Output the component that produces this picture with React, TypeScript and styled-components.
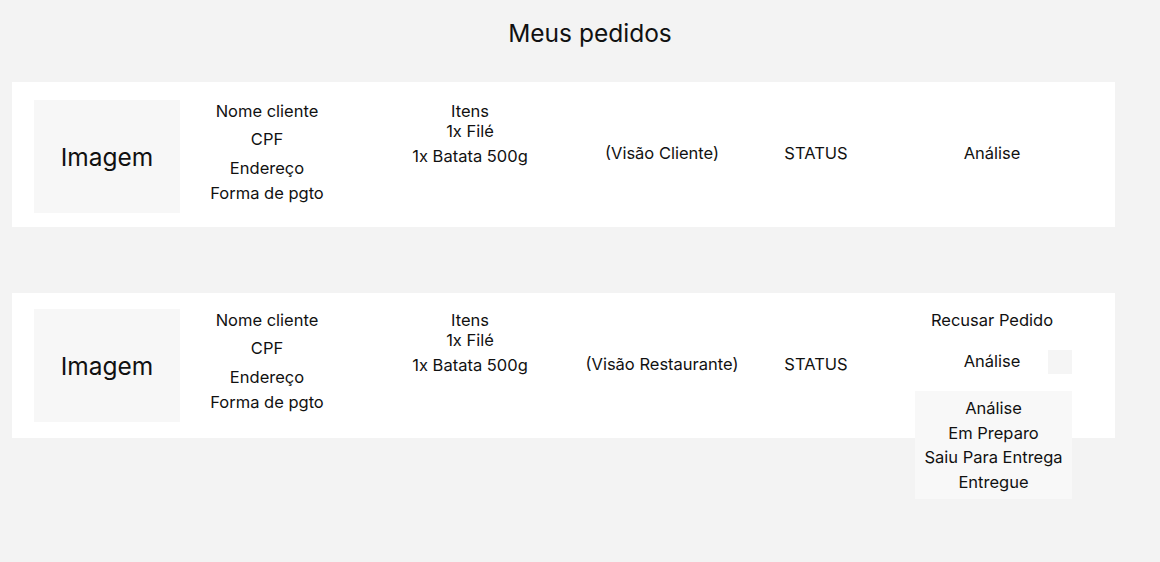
import React from "react";
import styled, { createGlobalStyle } from "styled-components";

const GlobalStyle = createGlobalStyle`
  html, body {
    margin: 0;
    padding: 0;
    background: #f3f3f3;
  }
  body {
    font-family: Inter, "Noto Sans", sans-serif;
    color: #111111;
  }
`;

const Page = styled.main`
  width: 1160px;
  height: 562px;
  box-sizing: border-box;
  padding: 0 45px 0 12px;
  display: flex;
  flex-direction: column;
  overflow: hidden;
`;

const Title = styled.h1`
  margin: 0;
  height: 82px;
  box-sizing: border-box;
  padding-top: 17px;
  padding-left: 53px;
  font-size: 24.5px;
  font-weight: 400;
  line-height: 32px;
  text-align: center;
`;

const OrderList = styled.div`
  display: flex;
  flex-direction: column;
  gap: 66px;
`;

const Card = styled.section`
  position: relative;
  height: 145px;
  background: #ffffff;
  display: flex;
  align-items: center;
  padding-left: 22px;
`;

const ImageBox = styled.div<{ $offset: number }>`
  width: 146px;
  height: 113px;
  background: #f7f7f7;
  display: flex;
  align-items: center;
  justify-content: center;
  font-size: 24.5px;
  align-self: flex-start;
  margin-top: ${(p) => p.$offset}px;
`;

const Column = styled.div<{ $width: number; $top?: number; $gutter?: number }>`
  width: ${(p) => p.$width}px;
  margin-left: ${(p) => p.$gutter ?? 0}px;
  display: flex;
  flex-direction: column;
  align-items: center;
  text-align: center;
  font-size: 16.5px;
  line-height: 20px;
  ${(p) =>
    p.$top !== undefined
      ? `align-self: flex-start; padding-top: ${p.$top}px;`
      : "padding-bottom: 3px;"}
`;

const Line = styled.span<{ $gap?: number }>`
  display: block;
  white-space: nowrap;
  margin-top: ${(p) => p.$gap ?? 0}px;
`;

const SelectRow = styled.div`
  position: relative;
  align-self: stretch;
  margin-top: 21px;
`;

const SelectTrigger = styled.span`
  position: absolute;
  right: 0;
  top: -1px;
  width: 24px;
  height: 24px;
  background: #f5f5f5;
`;

const Dropdown = styled.ul`
  position: absolute;
  right: 0;
  top: 40px;
  width: 157px;
  margin: 0;
  padding: 5px 0;
  list-style: none;
  background: #f8f8f8;
  z-index: 2;
`;

const Option = styled.li`
  font-size: 16.5px;
  line-height: 24.5px;
  text-align: center;
  white-space: nowrap;
`;

function ClientInfo({ top }: { top: number }) {
  return (
    <Column $width={174} $top={top}>
      <Line>Nome cliente</Line>
      <Line $gap={8}>CPF</Line>
      <Line $gap={9}>Endereço</Line>
      <Line $gap={5}>Forma de pgto</Line>
    </Column>
  );
}

function Items({ top }: { top: number }) {
  return (
    <Column $width={232} $top={top}>
      <Line>Itens</Line>
      <Line>1x Filé</Line>
      <Line $gap={5}>1x Batata 500g</Line>
    </Column>
  );
}

export default function App() {
  return (
    <>
      <GlobalStyle />
      <Page>
        <Title>Meus pedidos</Title>
        <OrderList>
          <Card>
            <ImageBox $offset={18}>Imagem</ImageBox>
            <ClientInfo top={19} />
            <Items top={19} />
            <Column $width={152}>
              <Line>(Visão Cliente)</Line>
            </Column>
            <Column $width={156}>
              <Line>STATUS</Line>
            </Column>
            <Column $width={160} $gutter={18}>
              <Line>Análise</Line>
            </Column>
          </Card>
          <Card>
            <ImageBox $offset={16}>Imagem</ImageBox>
            <ClientInfo top={17} />
            <Items top={17} />
            <Column $width={152}>
              <Line>(Visão Restaurante)</Line>
            </Column>
            <Column $width={156}>
              <Line>STATUS</Line>
            </Column>
            <Column $width={160} $gutter={18} $top={17}>
              <Line>Recusar Pedido</Line>
              <SelectRow>
                <Line>Análise</Line>
                <SelectTrigger />
                <Dropdown>
                  <Option>Análise</Option>
                  <Option>Em Preparo</Option>
                  <Option>Saiu Para Entrega</Option>
                  <Option>Entregue</Option>
                </Dropdown>
              </SelectRow>
            </Column>
          </Card>
        </OrderList>
      </Page>
    </>
  );
}
